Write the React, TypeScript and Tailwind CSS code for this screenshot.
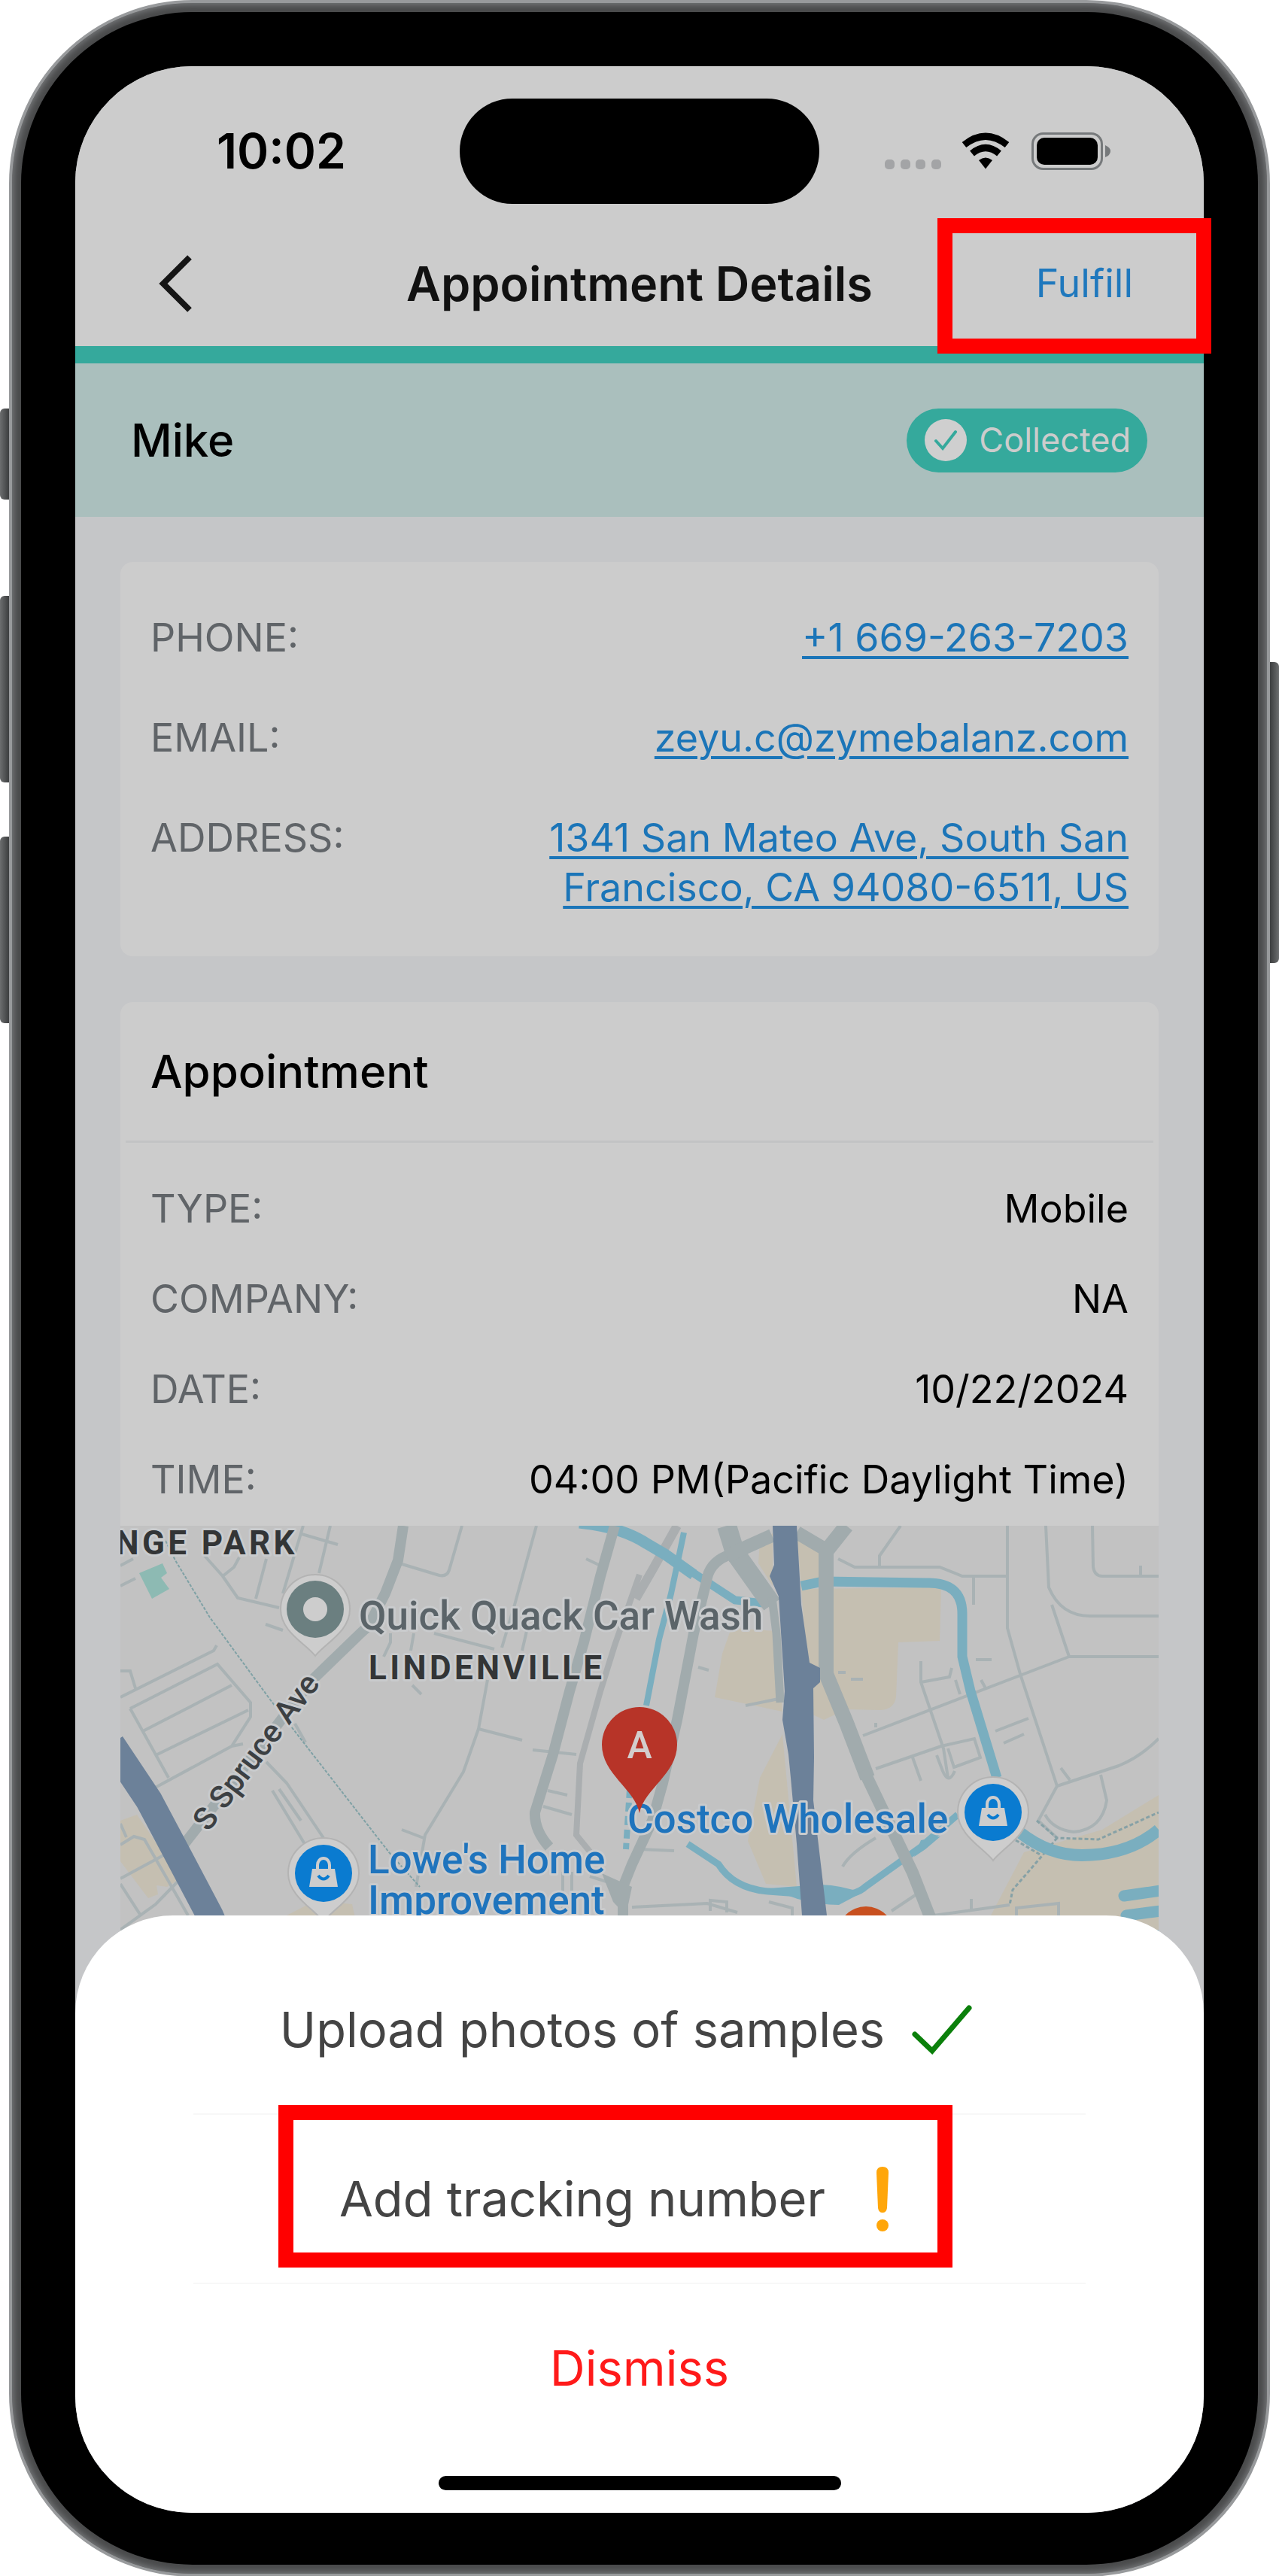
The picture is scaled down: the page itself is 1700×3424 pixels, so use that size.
/**
 * Appointment details screen inside a phone frame,
 * with the fulfilment action sheet open over the map.
 */

const contactRows = [
  { label: "PHONE:", value: "+1 669-263-7203", href: "tel:+16692637203" },
  { label: "EMAIL:", value: "zeyu.c@zymebalanz.com", href: "mailto:zeyu.c@zymebalanz.com" },
  { label: "ADDRESS:", value: "1341 San Mateo Ave, South San Francisco, CA 94080-6511, US", href: "#map" },
];

const appointmentRows = [
  { label: "TYPE:", value: "Mobile" },
  { label: "COMPANY:", value: "NA" },
  { label: "DATE:", value: "10/22/2024" },
  { label: "TIME:", value: "04:00 PM(Pacific Daylight Time)" },
];

function StatusBar() {
  return (
    <div className="grid grid-cols-[1fr_478px_1fr] items-center pt-[43px]">
      <span className="pl-[188px] text-[64px] leading-[72px] font-semibold text-black">10:02</span>
      <div className="h-[140px] rounded-[70px] bg-black" />
      <div className="flex items-center justify-end pr-[124px]">
        <svg className="h-[52px] w-[300px]" viewBox="0 0 300 52" aria-hidden="true">
          <g fill="#a3a4a6">
            <rect x="0" y="37" width="13" height="13" rx="5" />
            <rect x="21" y="37" width="13" height="13" rx="5" />
            <rect x="41" y="37" width="13" height="13" rx="5" />
            <rect x="62" y="37" width="13" height="13" rx="5" />
          </g>
          <g fill="none" stroke="#000" strokeWidth="9">
            <path d="M105.500 17.500 Q134 -5 162.500 17.500" />
            <path d="M116 29 Q134 14 152 29" />
          </g>
          <path d="M125 38 Q134 31 143 38 L134 49.500 Z" fill="#000" />
          <rect x="196.500" y="2.500" width="92" height="47" rx="14" fill="none" stroke="#76797b" strokeWidth="3" />
          <rect x="202" y="8" width="81" height="36" rx="10" fill="#000" />
          <path d="M293 18 Q300 21 300 26 Q300 31 293 34 Z" fill="#76797b" />
        </svg>
      </div>
    </div>
  );
}

function NavBar() {
  return (
    <div className="mt-[23px] grid h-[166px] grid-cols-[1fr_auto_1fr] items-center">
      <button className="ml-[108px] w-[50px]" aria-label="Back">
        <svg className="h-[80px] w-[50px]" viewBox="0 0 50 80" fill="none" stroke="#151515" strokeWidth="8">
          <path d="M44 5 L9 40 L44 75" />
        </svg>
      </button>
      <h1 className="text-[63px] leading-[72px] font-semibold text-[#111111]">Appointment Details</h1>
      <div className="relative flex h-full items-center justify-end pr-[94px]">
        <button className="text-[52px] leading-[66px] text-[#1f78bd]">Fulfill</button>
        <div className="pointer-events-none absolute -top-1 -right-[10px] z-10 h-[180px] w-[364px] border-20 border-[#ff0000]" />
      </div>
    </div>
  );
}

function PatientBanner() {
  return (
    <div className="flex h-[227px] items-center justify-between border-t-23 border-[#35a99c] bg-[#aabfbd] pr-[75px] pl-[74px]">
      <h2 className="text-[60px] leading-[72px] font-medium text-black">Mike</h2>
      <span className="flex h-[85px] items-center gap-4 rounded-full bg-[#35a99c] pr-[22px] pl-6 text-[45px] leading-[60px] text-[#cccccc]">
        <svg className="h-[56px] w-[56px]" viewBox="0 0 56 56" aria-hidden="true">
          <circle cx="28" cy="28" r="28" fill="#cfcfcf" />
          <path d="M15 29 L24 39 L41 17" fill="none" stroke="#35a99c" strokeWidth="4" strokeLinecap="round" />
        </svg>
        Collected
      </span>
    </div>
  );
}

function ShopPin({ x, y }: { x: number; y: number }) {
  return (
    <g transform={`translate(${x} ${y})`}>
      <path d="M0 64 C-12 48 -47 30 -47 0 A47 47 0 0 1 47 0 C47 30 12 48 0 64 Z" fill="#cdcdcd" stroke="#b3b3b3" strokeWidth="2" />
      <circle r="38" fill="#0a7bd0" />
      <path d="M-15 -6 H15 L19 18 H-19 Z" fill="#cdcdcd" />
      <path d="M-8 -6 V-11 A8 9 0 0 1 8 -11 V-6" fill="none" stroke="#cdcdcd" strokeWidth="4" />
      <path d="M-7 3 Q0 12 7 3" fill="none" stroke="#0a7bd0" strokeWidth="4" />
    </g>
  );
}

function MapView() {
  return (
    <svg
      id="map"
      className="block h-[648px] w-full"
      viewBox="0 0 1380 648"
      preserveAspectRatio="xMidYMin slice"
      role="img"
      aria-label="Map of the appointment address"
    >
      <rect width="1380" height="648" fill="#c2c2c2" />

      {/* Commercial areas */}
      <g fill="#c5bfb1">
        <path d="M0 392 L22 384 L80 469 L62 480 L48 478 L50 490 L37 495 L0 446 Z" />
        <path d="M221 518 L260 498 L308 503 L314 530 H221 Z" />
        <path d="M905 84 L1091 82 L1089 153 L1034 155 L1031 228 Q1028 245 1009 245 L965 244 L935 258 L918 250 Z" />
        <path d="M812 136 L872 140 L880 247 L790 228 L800 170 Z" />
        <path d="M880 277 L899 480 L858 476 L834 419 L850 335 Z" />
        <path d="M850 20 L867 10 V80 L848 50 Z M899 10 L936 36 V80 L905 84 Z" />
        <path d="M1380 358 L1305 404 L1201 434 L1157 518 L1140 648 H1380 Z" />
      </g>
      <path d="M25 63 L56 50 L62 63 L54 69 L65 84 L42 97 Z" fill="#8dbab3" />

      {/* Local streets */}
      <g fill="none" stroke="#a9b2b4" strokeWidth="4">
        <path d="M112 40 L136 67 L156 96 L211 109 M136 67 L151 55 L158 42 M194 44 L180 97 M243 0 L216 90 M279 0 L264 63 M241 11 L289 25" />
        <path d="M371 50 L424 66 Q434 68 437 59 L454 0 M553 0 L524 105 L507 162 M417 143 L497 164 M359 143 L359 155 L350 174 M390 143 L386 166 M540 140 L534 166 M193 131 L216 139" />
        <path d="M488 205 L476 270 L456 327 L405 411 L393 480 M476 270 L534 285 M374 404 L403 415 M388 212 L400 224" />
        <path d="M13 243 L129 184 L173 235 V254 L148 293 L39 352 M13 243 L64 335 M30 273 L148 212 M49 304 L170 245 M148 293 L163 290" />
        <path d="M0 228 L124 166 L128 159 M0 193 H13 L20 216 M0 80 L20 70 M0 53 L17 44" />
        <path d="M194 314 L221 342 L270 415 M202 352 L245 423 M211 350 L240 392 M232 263 L246 288" />
        <path d="M0 424 L18 413 L32 417 L66 476 L90 518 M0 469 L61 436 M0 476 L27 518 M0 537 L47 503 L80 469 M0 396 L8 414" />
        <path d="M548 298 L606 304 M568 352 L594 358 M562 373 L600 384 M619 44 L638 53 M624 466 L668 480 M588 460 V518 M600 460 V518" />
        <path d="M1037 0 L1009 40 V53 M954 44 L976 55 H1089 L1119 67 H1179 M1134 67 V105 M1179 0 V136 L1196 197 L1245 346 L1220 392 L1245 415" />
        <path d="M1230 0 L1234 82 Q1250 120 1289 120 H1380 M1292 0 L1293 55 Q1295 67 1305 67 H1380 M1356 53 V67 M1238 105 L1261 174 H1380 M1261 174 L987 279 M1004 268 V262" />
        <path d="M1064 180 V208 L1094 296 L1100 335 M1064 208 L1102 201 L1105 189 M1110 205 L1116 224 M1144 205 L1150 216 M1004 323 L1091 293 L1135 283 L1143 308 L1108 321 L1100 296 M1053 308 L1064 339" />
        <path d="M1085 305 L1093 326 Q1101 345 1109 326 M1163 273 L1207 256 M1174 289 L1201 277 M1137 178 H1158 M971 204 H987 M954 195 H964" />
        <path d="M1245 346 L1327 319 Q1355 308 1380 283 M1303 331 L1311 365 Q1305 404 1267 407 Q1240 404 1229 384 M1250 322 L1262 338" />
        <path d="M831 239 L880 229 M768 188 L782 192 M680 507 L780 502 L820 514 M784 512 V498 L806 500 V514 M960 453 Q970 435 1004 415 M1025 512 L1058 490 M862 500 L893 508 V518 M690 430 L736 432" />
        <path d="M1191 518 V508 L1247 502 V518 M1131 496 V512 M1081 518 L1182 504" />
      </g>

      {/* Rail and footpaths */}
      <path d="M60 20 L73 46 L119 122 L199 231 L357 434 L398 480" fill="none" stroke="#7fa1a5" strokeWidth="2" strokeDasharray="4 2" />
      <g fill="none" stroke="#86a1a6" strokeWidth="3" strokeDasharray="5 3">
        <path d="M1218 392 L1245 415 L1300 417 L1380 381" />
        <path d="M1245 415 L1224 440 L1186 484 L1182 504 M1190 418 L1224 438" />
      </g>
      <g fill="none" stroke="#aaaeb0">
        <path d="M690 65 L657 159 L638 220 L611 316 L606 411 L628 438" strokeWidth="8" />
        <path d="M740 0 L707 59 L685 97" strokeWidth="12" />
      </g>

      {/* Water */}
      <g fill="none" stroke="#7aaebf">
        <path d="M610 -4 Q667 2 700 24 L724 38 L762 65" strokeWidth="15" />
        <path d="M762 63 L817 99 L855 103" strokeWidth="11" />
        <path d="M749 9 L732 90 L716 151 L699 239" strokeWidth="8" />
        <path d="M677 350 L672 430" strokeWidth="8" strokeDasharray="12 6" />
        <path d="M905 80 L934 74 L1070 76 Q1119 74 1119 117 V174 L1130 220 L1165 335" strokeWidth="13" />
        <path d="M754 423 L795 450 Q815 482 861 486 L943 492 Q978 492 990 480 L1064 427 L1113 384" strokeWidth="9" />
        <path d="M1196 408 Q1234 438 1278 438 Q1340 438 1380 404" strokeWidth="16" />
        <path d="M1334 492 L1390 484 M1337 518 L1390 511 M1366 545 H1390" strokeWidth="15" strokeLinecap="round" />
      </g>
      <path d="M861 482 L930 477 Q960 478 985 488 L955 504 Q930 504 900 496 Z M1064 418 L1090 413 L1070 430 L1055 440 Z" fill="#7aaebf" />

      {/* Main roads */}
      <g fill="none" stroke="#a1abad">
        <path d="M376 0 L369 46 L352 90 L330 133 L319 143 L255 205 L85 423" strokeWidth="14" />
        <path d="M657 0 L638 67 L616 155 L597 220 L575 304 L551 381 Q550 405 570 427" strokeWidth="14" />
        <path d="M806 40 Q782 50 779 74 L762 143 L740 258 L721 342 L707 392 L680 450 L668 480 V540" strokeWidth="14" />
        <path d="M806 0 L817 36 L866 105" strokeWidth="26" />
        <path d="M806 40 L866 13 M899 9 L938 32" strokeWidth="18" />
        <path d="M866 95 L872 143 L877 235" strokeWidth="11" />
        <path d="M965 0 L938 34 V197 L965 262 L993 335" strokeWidth="20" />
        <path d="M988 325 L1020 392 L1053 461 L1078 525" strokeWidth="16" />
      </g>
      <path d="M640 462 L680 480 L672 518 L655 500 Z" fill="#a1abad" />

      {/* Freeways */}
      <path d="M-12 290 L38 365 L81 446 L119 518 L150 590" fill="none" stroke="#6c8199" strokeWidth="36" />
      <path
        d="M867 0 H899 L905 105 L916 182 L930 189 V208 L921 216 L922 308 L921 365 L939 518 L942 648 H908 L906 518 L899 423 L891 335 L888 304 L880 258 L883 220 L875 94 L863 67 L869 52 Z"
        fill="#6c8199"
      />

      {/* Place pins */}
      <g transform="translate(259 111)">
        <path d="M0 62 C-12 46 -46 30 -46 0 A46 46 0 0 1 46 0 C46 30 12 46 0 62 Z" fill="#cdcdcd" stroke="#b3b3b3" strokeWidth="2" />
        <circle r="38" fill="#6b7f80" />
        <circle r="16" fill="#cdcdcd" />
      </g>
      <ShopPin x={270} y={462} />
      <ShopPin x={1160} y={381} />
      <circle cx="991" cy="544" r="38" fill="#c8501f" />

      {/* Labels */}
      <g fontFamily="Roboto, sans-serif" stroke="#c9cbcd" strokeWidth="6" strokeLinejoin="round" className="[paint-order:stroke]">
        <g fill="#333536" fontWeight="700" fontSize="44" className="tracking-widest">
          <text x="236" y="38" textAnchor="end">NGE PARK</text>
          <text x="330" y="204">LINDENVILLE</text>
        </g>
        <g fontWeight="500" fontSize="53">
          <text x="317" y="138" fill="#5b6469">Quick Quack Car Wash</text>
          <text y="462" fill="#1f74bd">
            <tspan x="329">Lowe's Home</tspan>
            <tspan x="329" dy="54">Improvement</tspan>
          </text>
          <text x="674" y="408" fill="#1f74bd">Costco Wholesale</text>
        </g>
        <text transform="translate(117 408) rotate(-53)" fill="#3c4043" fontSize="42" fontWeight="500">S Spruce Ave</text>
      </g>

      {/* Appointment marker */}
      <path d="M690 382 C684 350 640 330 640 291 A50 50 0 0 1 740 291 C740 330 696 350 690 382 Z" fill="#b73428" />
      <text x="690" y="309" textAnchor="middle" fontFamily="Roboto, sans-serif" fontSize="50" fontWeight="500" fill="#d3cdcc">A</text>
    </svg>
  );
}

function ActionSheet() {
  return (
    <section className="relative -mt-[130px] rounded-t-[130px] rounded-b-[155px] bg-white px-[157px] pt-10 pb-[30px]">
      <button className="flex h-[225px] w-full items-center justify-center border-b-2 border-[#f8f8f8] text-[65px] leading-[80px] text-[#444444]">
        Upload photos of samples
        <span className="flex w-[152px] justify-center">
          <svg className="h-[72px] w-[84px]" viewBox="0 0 84 72" fill="none" stroke="#0b800b" strokeWidth="7" strokeLinecap="round" aria-hidden="true">
            <path d="M6 42 L29 64 L78 7" />
          </svg>
        </span>
      </button>
      <div className="relative border-b-2 border-[#f8f8f8]">
        <button className="flex h-[223px] w-full items-center justify-center text-[65px] leading-[80px] text-[#444444]">
          Add tracking number
          <span className="flex w-[152px] justify-center">
            <svg className="h-[88px] w-[18px]" viewBox="0 0 18 88" fill="#ffa60a" aria-hidden="true">
              <path d="M1 9 Q1 1 9 1 Q17 1 17 9 L15 56 Q14 62 9 62 Q4 62 3 56 Z" />
              <circle cx="9" cy="79" r="8" />
            </svg>
          </span>
        </button>
        <div className="pointer-events-none absolute -top-[13px] right-[177px] left-[113px] h-[216px] border-20 border-[#ff0000]" />
      </div>
      <button className="flex h-[223px] w-full items-center justify-center text-[65px] leading-[80px] text-[#ff1a1a]">
        Dismiss
      </button>
      <div className="mx-auto mt-8 h-[19px] w-[535px] rounded-full bg-black" />
    </section>
  );
}

export default function App() {
  return (
    <div className="min-h-screen bg-white px-3 font-['Inter',sans-serif]">
      <div className="relative">
        {/* Side buttons */}
        <div className="absolute top-[543px] -left-3 h-[121px] w-3 rounded-l-md bg-linear-to-r from-[#6c6e6f] to-[#3c3e3f]" />
        <div className="absolute top-[792px] -left-3 h-[248px] w-3 rounded-l-md bg-linear-to-r from-[#6c6e6f] to-[#3c3e3f]" />
        <div className="absolute top-[1112px] -left-3 h-[248px] w-3 rounded-l-md bg-linear-to-r from-[#6c6e6f] to-[#3c3e3f]" />
        <div className="absolute top-[880px] -right-3 h-[400px] w-3 rounded-r-md bg-linear-to-r from-[#3c3e3f] to-[#6c6e6f]" />

        <div className="rounded-[244px] border-4 border-[#989a9c] bg-[#4a4b4c] p-3 shadow-[inset_0_0_8px_2px_#7b7d7f]">
          <div className="rounded-[228px] bg-black px-[72px] pt-[72px] pb-[69px]">
            <main className="rounded-[155px] bg-[#c5c6c8]">
              <header className="rounded-t-[155px] bg-[#cccccc]">
                <StatusBar />
                <NavBar />
              </header>
              <PatientBanner />

              <div className="flex flex-col gap-[61px] px-[60px] pt-[60px]">
                <section className="flex flex-col gap-[67px] rounded-2xl bg-[#cccccc] px-10 pt-[68px] pb-[58px] text-[52px] leading-[66px]">
                  {contactRows.map((row) => (
                    <div key={row.label} className="flex justify-between">
                      <span className="text-[#606468]">{row.label}</span>
                      <a
                        href={row.href}
                        className="max-w-[800px] text-right text-[#1b75b8] underline decoration-4 underline-offset-6"
                      >
                        {row.value}
                      </a>
                    </div>
                  ))}
                </section>

                <section className="rounded-t-2xl bg-[#cccccc]">
                  <h2 className="mx-[7px] border-b-3 border-[#c2c3c4] px-[33px] py-14 text-[60px] leading-[72px] font-medium text-black">
                    Appointment
                  </h2>
                  <div className="flex flex-col gap-[54px] px-10 pt-[55px] pb-7 text-[52px] leading-[66px]">
                    {appointmentRows.map((row) => (
                      <div key={row.label} className="flex justify-between">
                        <span className="text-[#606468]">{row.label}</span>
                        <span className="text-black">{row.value}</span>
                      </div>
                    ))}
                  </div>
                  <MapView />
                </section>
              </div>

              <ActionSheet />
            </main>
          </div>
        </div>
      </div>
    </div>
  );
}
